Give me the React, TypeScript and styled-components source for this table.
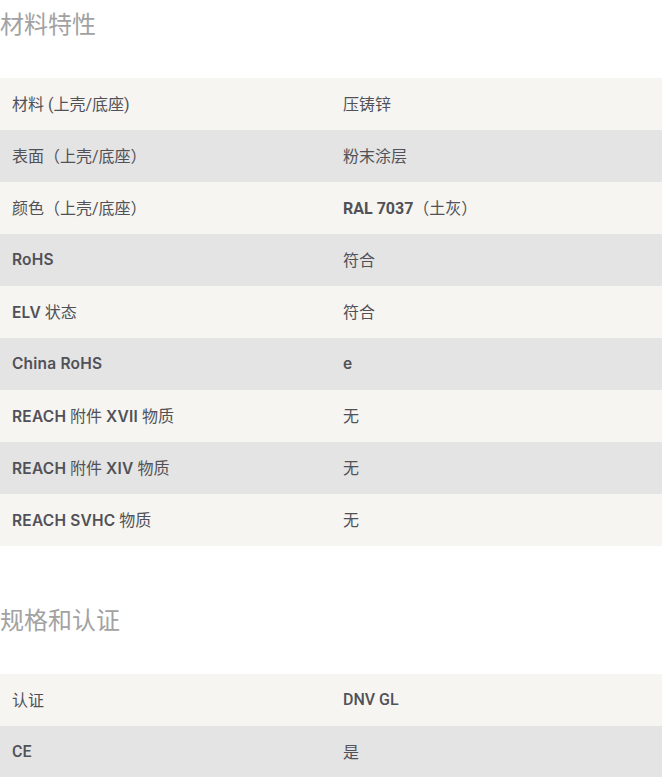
import React from "react";
import styled, { createGlobalStyle } from "styled-components";

const Global = createGlobalStyle`
  html, body { margin: 0; padding: 0; background: #ffffff; }
  body { font-family: Roboto, "Noto Sans CJK SC", sans-serif; }
`;

const Page = styled.div`
  width: 662px;
  display: flex;
  flex-direction: column;
`;

const Section = styled.section<{ $gap: number }>`
  display: flex;
  flex-direction: column;
  margin-top: ${(p) => p.$gap}px;
`;

const Heading = styled.h2`
  margin: 0;
  height: 52px;
  padding-top: 8px;
  box-sizing: border-box;
  font-family: Roboto, "Noto Sans CJK SC", sans-serif;
  font-weight: 400;
  font-size: 24px;
  line-height: 34px;
  color: #a2a2a2;
`;

const Table = styled.div`
  margin-top: 26px;
  display: flex;
  flex-direction: column;
`;

const Row = styled.div<{ $shade: boolean }>`
  display: grid;
  grid-template-columns: 1fr 1fr;
  height: 52px;
  align-items: center;
  background: ${(p) => (p.$shade ? "#e4e4e4" : "#f6f5f1")};
`;

const Cell = styled.div`
  padding: 0 12px 2px;
  font-family: Roboto, "Noto Sans CJK SC", sans-serif;
  font-size: 16px;
  color: #515157;
  white-space: nowrap;
`;

const B = styled.span<{ $wide?: boolean; $weight?: number }>`
  font-family: ${(p) =>
    p.$wide ? `Inter, "Noto Sans CJK SC", sans-serif` : `Roboto, "Noto Sans CJK SC", sans-serif`};
  font-weight: ${(p) => p.$weight ?? (p.$wide ? 600 : 700)};
  font-size: ${(p) => (p.$wide ? "15.5px" : "16px")};
  letter-spacing: ${(p) => (p.$wide ? "0.2px" : "0")};
`;

type Item = { label: React.ReactNode; value: React.ReactNode };

const materials: Item[] = [
  { label: "材料 (上壳/底座)", value: "压铸锌" },
  { label: "表面（上壳/底座）", value: "粉末涂层" },
  {
    label: "颜色（上壳/底座）",
    value: (
      <>
        <B>RAL 7037</B>（土灰）
      </>
    ),
  },
  { label: <B $wide>RoHS</B>, value: "符合" },
  {
    label: (
      <>
        <B $wide>ELV</B> 状态
      </>
    ),
    value: "符合",
  },
  { label: <B $wide>China RoHS</B>, value: <B $wide>e</B> },
  {
    label: (
      <>
        <B $wide>REACH</B> 附件 <B $wide>XVII</B> 物质
      </>
    ),
    value: "无",
  },
  {
    label: (
      <>
        <B $wide>REACH</B> 附件 <B $wide>XIV</B> 物质
      </>
    ),
    value: "无",
  },
  {
    label: (
      <>
        <B $wide>REACH SVHC</B> 物质
      </>
    ),
    value: "无",
  },
];

const certs: Item[] = [
  { label: "认证", value: <B $weight={500}>DNV GL</B> },
  { label: <B $weight={500}>CE</B>, value: "是" },
];

const DataTable = ({ items }: { items: Item[] }) => (
  <Table>
    {items.map((it, i) => (
      <Row key={i} $shade={i % 2 === 1}>
        <Cell>{it.label}</Cell>
        <Cell>{it.value}</Cell>
      </Row>
    ))}
  </Table>
);

export default function App() {
  return (
    <Page>
      <Global />
      <Section $gap={0}>
        <Heading>材料特性</Heading>
        <DataTable items={materials} />
      </Section>
      <Section $gap={50}>
        <Heading>规格和认证</Heading>
        <DataTable items={certs} />
      </Section>
    </Page>
  );
}
